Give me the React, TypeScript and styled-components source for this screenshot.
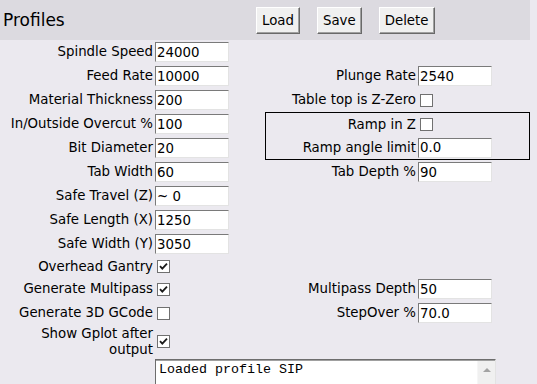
import React from 'react';
import styled, { createGlobalStyle } from 'styled-components';

const GlobalStyle = createGlobalStyle`
  html, body {
    margin: 0;
    padding: 0;
    background: #ebe9ef;
  }
  body {
    font-family: "DejaVu Sans", Verdana, sans-serif;
    font-size: 13.33px;
    color: #000;
  }
`;

const Page = styled.div`
  width: 530px;
  height: 384px;
  overflow: hidden;
`;

const Header = styled.div`
  display: flex;
  align-items: center;
  height: 40px;
  background: #dcdae0;
`;

const Title = styled.h2`
  margin: 0;
  width: 256px;
  padding-left: 3px;
  box-sizing: border-box;
  font-size: 17px;
  font-weight: normal;
`;

const Toolbar = styled.div`
  display: flex;
  gap: 17px;
`;

const Button = styled.button`
  height: 27px;
  padding: 0 5px;
  font: inherit;
  color: #000;
  background: #f0f0f0;
  border: 1px solid;
  border-color: #fff #696969 #696969 #fff;
  box-shadow: inset -1px -1px #a0a0a0;
`;

const Form = styled.div`
  display: grid;
  grid-template-columns: 154px 111px 152px 113px;
  grid-template-rows: repeat(9, 24px) 21px 24px 24px 33px auto;
  align-items: center;
`;

type Cell = { $row: number; $col?: number };

const Label = styled.label<Cell>`
  grid-row: ${p => p.$row};
  grid-column: ${p => p.$col ?? 1};
  text-align: right;
  padding-right: 1px;
  line-height: 16px;
  white-space: ${p => (p.$col ?? 1) === 1 ? 'normal' : 'nowrap'};
`;

const Field = styled.input<Cell>`
  grid-row: ${p => p.$row};
  grid-column: ${p => p.$col ?? 2};
  justify-self: start;
  box-sizing: border-box;
  width: 74px;
  height: 20px;
  margin: 0 0 0 1px;
  padding: 0 1px;
  font: inherit;
  color: #000;
  background: #fff;
  border: 1px solid;
  border-color: #7a7a7a #e3e3e3 #e3e3e3 #7a7a7a;
  outline: none;
`;

const Box = styled.span<Cell>`
  grid-row: ${p => p.$row};
  grid-column: ${p => p.$col ?? 2};
  justify-self: start;
  display: flex;
  align-items: center;
  justify-content: center;
  box-sizing: border-box;
  width: 13px;
  height: 13px;
  margin-left: 3px;
  background: #fff;
  border: 1px solid #707070;
`;

const RampGroup = styled.div`
  grid-row: 4 / 6;
  grid-column: 3 / 5;
  align-self: stretch;
  display: grid;
  grid-template-columns: 151px 1fr;
  grid-template-rows: 1fr 1fr;
  align-items: center;
  border: 1px solid #000;
`;

const LogFrame = styled.div`
  grid-row: 14;
  grid-column: 2 / 5;
  justify-self: start;
  position: relative;
  box-sizing: border-box;
  width: 341px;
  height: 60px;
  margin: 1px 0 0 1px;
  border: 1px solid;
  border-color: #6d6d6d #e3e3e3 #e3e3e3 #6d6d6d;
  box-shadow: inset 0 1px #a0a0a0;
  background: #fff;
`;

const Log = styled.textarea`
  display: block;
  box-sizing: border-box;
  width: 100%;
  height: 100%;
  margin: 0;
  padding: 2px 20px 2px 3px;
  font-family: "Liberation Mono", "Courier New", monospace;
  font-size: 13.33px;
  color: #000;
  background: transparent;
  border: none;
  overflow: hidden;
  resize: none;
  outline: none;
`;

const ScrollTrack = styled.div`
  position: absolute;
  top: 1px;
  right: 0;
  bottom: 0;
  width: 17px;
  background: #f0f0f0;
  border-left: 1px solid #f6f6f6;
`;

const ScrollUp = styled.div`
  display: flex;
  align-items: center;
  justify-content: center;
  height: 17px;

  &::before {
    content: '';
    border-left: 4px solid transparent;
    border-right: 4px solid transparent;
    border-bottom: 4px solid #a3a3a3;
  }
`;

function Check({ row, col, on }: { row: number; col?: number; on?: boolean }) {
  return (
    <Box $row={row} $col={col} role='checkbox' aria-checked={!!on}>
      {on && (
        <svg width='9' height='9' viewBox='0 0 9 9'>
          <path d='M1 4.2 L3.3 6.6 L8 1.6' fill='none' stroke='#1a1a1a' strokeWidth='1.8' />
        </svg>
      )}
    </Box>
  );
}

const leftFields = [
  ['Spindle Speed', '24000'],
  ['Feed Rate', '10000'],
  ['Material Thickness', '200'],
  ['In/Outside Overcut %', '100'],
  ['Bit Diameter', '20'],
  ['Tab Width', '60'],
  ['Safe Travel (Z)', '~ 0'],
  ['Safe Length (X)', '1250'],
  ['Safe Width (Y)', '3050'],
];

const leftChecks: [string, boolean][] = [
  ['Overhead Gantry', true],
  ['Generate Multipass', true],
  ['Generate 3D GCode', false],
  ['Show Gplot after output', true],
];

export default function App(): React.ReactElement {
  return (
    <Page>
      <GlobalStyle />
      <Header>
        <Title>Profiles</Title>
        <Toolbar>
          <Button>Load</Button>
          <Button>Save</Button>
          <Button>Delete</Button>
        </Toolbar>
      </Header>
      <Form>
        {leftFields.map(([label, value], i) => (
          <React.Fragment key={label}>
            <Label $row={i + 1}>{label}</Label>
            <Field $row={i + 1} defaultValue={value} />
          </React.Fragment>
        ))}
        {leftChecks.map(([label, on], i) => (
          <React.Fragment key={label}>
            <Label $row={i + 10}>{label}</Label>
            <Check row={i + 10} on={on} />
          </React.Fragment>
        ))}

        <Label $row={2} $col={3}>Plunge Rate</Label>
        <Field $row={2} $col={4} defaultValue='2540' />
        <Label $row={3} $col={3}>Table top is Z-Zero</Label>
        <Check row={3} col={4} />
        <RampGroup>
          <Label $row={1} $col={1}>Ramp in Z</Label>
          <Check row={1} col={2} />
          <Label $row={2} $col={1}>Ramp angle limit</Label>
          <Field $row={2} $col={2} defaultValue='0.0' />
        </RampGroup>
        <Label $row={6} $col={3}>Tab Depth %</Label>
        <Field $row={6} $col={4} defaultValue='90' />
        <Label $row={11} $col={3}>Multipass Depth</Label>
        <Field $row={11} $col={4} defaultValue='50' />
        <Label $row={12} $col={3}>StepOver %</Label>
        <Field $row={12} $col={4} defaultValue='70.0' />

        <LogFrame>
          <Log readOnly defaultValue='Loaded profile SIP' />
          <ScrollTrack>
            <ScrollUp />
          </ScrollTrack>
        </LogFrame>
      </Form>
    </Page>
  );
}
